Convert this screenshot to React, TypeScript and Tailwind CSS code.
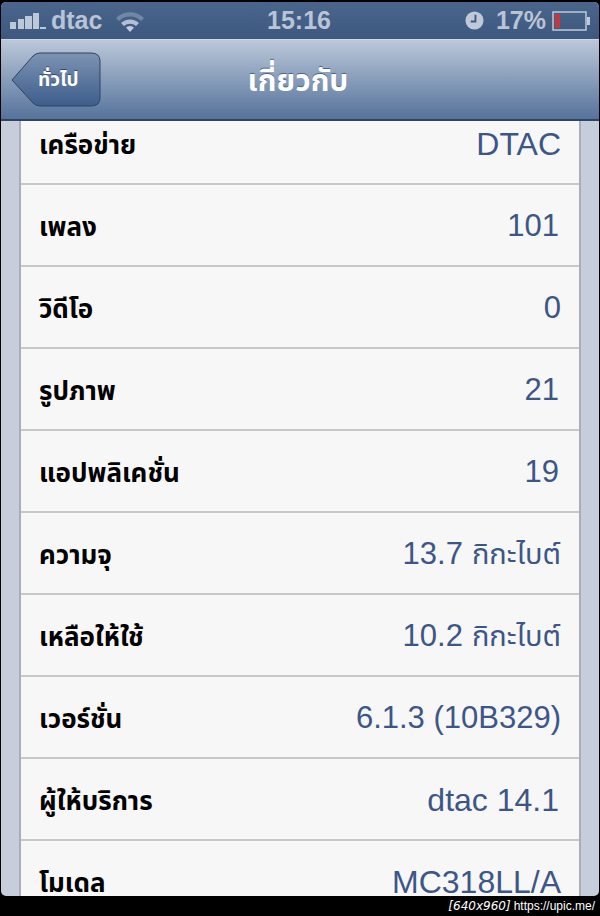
import React from "react";

const font = { fontFamily: '"Liberation Sans", "Noto Sans Thai", "Noto Sans", "DejaVu Sans", sans-serif' };

const rows: { label: string; value: string; unit?: string; big?: boolean; inset?: boolean; first?: boolean }[] = [
  { label: "เครือข่าย", value: "DTAC", first: true, big: true },
  { label: "เพลง", value: "101", inset: true },
  { label: "วิดีโอ", value: "0" },
  { label: "รูปภาพ", value: "21", inset: true },
  { label: "แอปพลิเคชั่น", value: "19", inset: true },
  { label: "ความจุ", value: "13.7", unit: "กิกะไบต์" },
  { label: "เหลือให้ใช้", value: "10.2", unit: "กิกะไบต์" },
  { label: "เวอร์ชั่น", value: "6.1.3 (10B329)" },
  { label: "ผู้ให้บริการ", value: "dtac 14.1", big: true, inset: true },
  { label: "โมเดล", value: "MC318LL/A", big: true },
];

function Signal() {
  return (
    <svg width="37" height="18" viewBox="0 0 37 18" className="mr-[4px]">
      <rect x="0" y="10" width="6" height="7" fill="#bcc7d7" />
      <rect x="8" y="7" width="6" height="10" fill="#bcc7d7" />
      <rect x="15" y="4" width="7" height="13" fill="#bcc7d7" />
      <rect x="23" y="1" width="6" height="16" fill="#bcc7d7" />
      <rect x="30" y="15" width="6" height="2" fill="#bcc7d7" />
    </svg>
  );
}

function Wifi() {
  return (
    <svg width="30" height="22" viewBox="0 0 30 22">
      <path d="M1 8 A20 20 0 0 1 29 8 L26 11 A16 16 0 0 0 4 11 Z" fill="#7187a6" />
      <path d="M6 13 A13 13 0 0 1 24 13 L21 16 A9 9 0 0 0 9 16 Z" fill="#b4c0d2" />
      <path d="M11 17.5 A6 6 0 0 1 19 17.5 L15 22 Z" fill="#c3cddb" />
    </svg>
  );
}

function Clock() {
  return (
    <svg width="19" height="19" viewBox="0 0 20 20">
      <circle cx="10" cy="10" r="9.5" fill="#bfc9d8" />
      <path d="M11 4 V11 H6" fill="none" stroke="#3f5a80" strokeWidth="2" />
    </svg>
  );
}

function Battery() {
  return (
    <svg width="40" height="20" viewBox="0 0 40 20">
      <rect x="1" y="1" width="33" height="18" fill="none" stroke="#bfc9d8" strokeWidth="1.5" />
      <rect x="3" y="3" width="5" height="14" fill="#c0393f" />
      <path d="M35 6 H38 V14 H35 Z" fill="#bfc9d8" />
    </svg>
  );
}

function BackButton() {
  return (
    <div className="relative ml-[10px] h-[55px] w-[90px]">
      <svg width="90" height="55" viewBox="0 0 90 55" className="absolute inset-0">
        <defs>
          <linearGradient id="back" x1="0" y1="0" x2="0" y2="1">
            <stop offset="0" stopColor="#7d93b2" />
            <stop offset="1" stopColor="#3d5d8c" />
          </linearGradient>
        </defs>
        <path
          d="M1 28 L22 4 Q25 1 29 1 H80 Q89 1 89 9 V46 Q89 54 80 54 H29 Q25 54 22 51 Z"
          fill="url(#back)"
          stroke="#2f4462"
          strokeWidth="1"
        />
      </svg>
      <span className="absolute left-[27px] top-[14px] text-[19px] leading-[28px] font-bold text-white [text-shadow:0_-1px_0_#33496b]">
        ทั่วไป
      </span>
    </div>
  );
}

export default function App() {
  return (
    <div style={font} className="flex h-[916px] w-[600px] flex-col overflow-hidden bg-black">
      <div className="mx-[1px] mt-[2px] flex h-[894px] flex-col overflow-hidden rounded-[5px] bg-[#c7cedb]">
        <div className="flex h-[37px] shrink-0 items-center bg-gradient-to-b from-[#4a668d] to-[#3c587f] pl-[9px] pr-[7px] text-[25px] text-[#b9c4d5]">
          <div className="flex flex-1 items-center">
            <Signal />
            <span className="font-bold">dtac</span>
            <span className="ml-[13px]">
              <Wifi />
            </span>
          </div>
          <span className="mr-[4px] font-bold">15:16</span>
          <div className="flex flex-1 items-center justify-end">
            <Clock />
            <span className="ml-[12px] mr-[6px] font-bold">17%</span>
            <Battery />
          </div>
        </div>
        <div className="relative flex h-[82px] shrink-0 items-center border-t border-t-[#d0d8e4] border-b-2 border-b-[#2f4562] bg-gradient-to-b from-[#bcc8d9] to-[#56739b]">
          <BackButton />
          <span className="absolute inset-x-0 top-[21px] pr-[4px] text-center text-[30px] leading-[40px] font-bold text-white [text-shadow:0_-1px_0_#4b6384]">
            เกี่ยวกับ
          </span>
        </div>
        <div className="mx-[18px] flex-1 overflow-hidden border-x-2 border-x-[#a9afb9] bg-[#f7f7f7]">
          {rows.map((r) => (
            <div
              key={r.label}
              className={
                r.first
                  ? "flex h-[64px] items-start justify-between border-b-2 border-b-[#c8c8c8] pl-[18px] pr-[18px] pt-[11px]"
                  : r.inset
                    ? "flex h-[82px] items-start justify-between border-b-2 border-b-[#c8c8c8] pl-[18px] pr-[20px] pt-[29px]"
                    : "flex h-[82px] items-start justify-between border-b-2 border-b-[#c8c8c8] pl-[18px] pr-[18px] pt-[29px]"
              }
            >
              <span className="text-[26px] leading-[26px] font-bold text-black">{r.label}</span>
              <span className={r.big ? "text-[32px] leading-[24px] text-[#3c5688]" : "text-[31px] leading-[24px] text-[#3c5688]"}>
                {r.value}
                {r.unit ? <span className="ml-[9px] text-[29px]">{r.unit}</span> : null}
              </span>
            </div>
          ))}
        </div>
      </div>
      <div className="flex h-[20px] items-center justify-end pr-[5px] text-[12px] leading-none text-white">
        <span className="italic" style={{ fontFamily: '"DejaVu Sans", sans-serif' }}>[640x960]</span>
        <span className="ml-[3px]" style={{ fontFamily: '"Liberation Sans", sans-serif' }}>https://upic.me/</span>
      </div>
    </div>
  );
}
